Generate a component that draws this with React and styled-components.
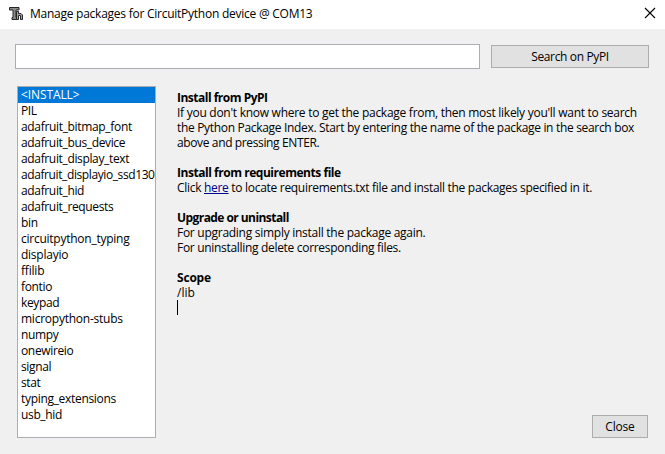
import React from "react";
import styled, { createGlobalStyle } from "styled-components";

const GlobalStyle = createGlobalStyle`
  * { box-sizing: border-box; }
  body { margin: 0; background: #f0f0f0; overflow: hidden; }
`;

const Dialog = styled.div`
  display: flex;
  flex-direction: column;
  width: 665px;
  height: 454px;
  background: #f0f0f0;
  color: #000;
  font-family: "Open Sans", "Noto Sans", sans-serif;
  font-size: 12px;
  white-space: nowrap;
`;

const TitleBar = styled.header`
  display: flex;
  align-items: center;
  height: 29px;
  flex: none;
  padding: 0 9px;
  background: #fff;
`;

const AppIcon = styled.svg`
  width: 14px;
  height: 13px;
  flex: none;
  margin-bottom: 2px;
`;

const Title = styled.h1`
  flex: 1;
  margin: 0 0 1px 7px;
  font-size: 12px;
  font-weight: 400;
  line-height: 16px;
  letter-spacing: -0.25px;
`;

const CloseIcon = styled.svg`
  width: 12px;
  height: 12px;
  flex: none;
  margin-bottom: 3px;
`;

const SearchRow = styled.div`
  display: flex;
  align-items: center;
  gap: 11px;
  padding: 15px 16px 0 15px;
`;

const SearchInput = styled.input`
  width: 465px;
  height: 25px;
  padding: 0 4px;
  border: 1px solid #abadb3;
  border-radius: 0;
  outline: none;
  background: #fff;
  font: inherit;
`;

const Button = styled.button`
  width: ${(p) => p.$width}px;
  height: 23px;
  padding: 0;
  border: 1px solid #adadad;
  border-radius: 0;
  background: #e1e1e1;
  color: #000;
  font: inherit;
  line-height: 21px;
  letter-spacing: ${(p) => p.$track}px;
`;

const Body = styled.main`
  display: flex;
  padding: 17px 17px 0;
`;

const PackageList = styled.ul`
  width: 139px;
  height: 352px;
  flex: none;
  margin: 0;
  padding: 0;
  border: 1px solid #abadb3;
  background: #fff;
  list-style: none;
  overflow: hidden;
`;

const PackageItem = styled.li`
  height: 16px;
  padding-left: 3px;
  line-height: 15px;
  letter-spacing: ${(p) => p.$track ?? -0.35}px;
  background: ${(p) => (p.$selected ? "#0078d7" : "transparent")};
  color: ${(p) => (p.$selected ? "#fff" : "#000")};
  overflow: hidden;
`;

const Side = styled.div`
  display: flex;
  flex: 1;
  flex-direction: column;
  justify-content: space-between;
  padding: 4px 0 0 21px;
`;

const Info = styled.div`
  display: flex;
  flex-direction: column;
  gap: 15px;
`;

const Heading = styled.h2`
  margin: 0;
  font-size: 12px;
  font-weight: 700;
  line-height: 15px;
  letter-spacing: ${(p) => p.$track ?? -0.5}px;
`;

const Line = styled.div`
  height: 15px;
  line-height: 15px;
  letter-spacing: ${(p) => p.$track ?? -0.27}px;
`;

const Link = styled.a`
  color: #00008b;
  text-decoration: underline;
  text-underline-offset: 1px;
`;

const Caret = styled.div`
  width: 1px;
  height: 15px;
  background: #000;
`;

const Footer = styled.div`
  display: flex;
  justify-content: flex-end;
`;

const packages = [
  ["<INSTALL>", -0.1],
  ["PIL"],
  ["adafruit_bitmap_font", -0.33],
  ["adafruit_bus_device"],
  ["adafruit_display_text"],
  ["adafruit_displayio_ssd1306", -0.4],
  ["adafruit_hid"],
  ["adafruit_requests"],
  ["bin"],
  ["circuitpython_typing", -0.25],
  ["displayio", -0.25],
  ["ffilib", -0.2],
  ["fontio"],
  ["keypad"],
  ["micropython-stubs", -0.24],
  ["numpy"],
  ["onewireio"],
  ["signal"],
  ["stat"],
  ["typing_extensions", -0.31],
  ["usb_hid"],
];

export default function App() {
  return (
    <>
      <GlobalStyle />
      <Dialog>
        <TitleBar>
          <AppIcon viewBox="0 0 14 13">
            <path
              d="M0.5 0.5h9.5v2.5h-3v7.5h1v2h-5v-2h1v-7.5h-3.5z"
              fill="#8a8a8a"
              stroke="#262626"
            />
            <path
              d="M7.5 4.5h2v2h2.5l1.5 1.5v4.5h-2v-4h-2v4h-2z"
              fill="#a0a0a0"
              stroke="#262626"
            />
          </AppIcon>
          <Title>Manage packages for CircuitPython device @ COM13</Title>
          <CloseIcon viewBox="0 0 12 12">
            <path d="M1 1l10 10M11 1L1 11" stroke="#000" strokeWidth="1.1" />
          </CloseIcon>
        </TitleBar>
        <SearchRow>
          <SearchInput aria-label="Package name" />
          <Button $width={158} $track={-0.36}>Search on PyPI</Button>
        </SearchRow>
        <Body>
          <PackageList>
            {packages.map(([name, track], i) => (
              <PackageItem key={name} $track={track} $selected={i === 0}>{name}</PackageItem>
            ))}
          </PackageList>
          <Side>
            <Info>
              <section>
                <Heading>Install from PyPI</Heading>
                <Line>If you don't know where to get the package from, then most likely you'll want to search</Line>
                <Line $track={-0.32}>the Python Package Index. Start by entering the name of the package in the search box</Line>
                <Line $track={-0.37}>above and pressing ENTER.</Line>
              </section>
              <section>
                <Heading $track={-0.46}>Install from requirements file</Heading>
                <Line $track={-0.3}>Click <Link>here</Link> to locate requirements.txt file and install the packages specified in it.</Line>
              </section>
              <section>
                <Heading $track={-0.56}>Upgrade or uninstall</Heading>
                <Line>For upgrading simply install the package again.</Line>
                <Line $track={-0.31}>For uninstalling delete corresponding files.</Line>
              </section>
              <section>
                <Heading $track={-0.2}>Scope</Heading>
                <Line $track={0}>/lib</Line>
                <Caret />
              </section>
            </Info>
            <Footer>
              <Button $width={56} $track={-0.2}>Close</Button>
            </Footer>
          </Side>
        </Body>
      </Dialog>
    </>
  );
}
